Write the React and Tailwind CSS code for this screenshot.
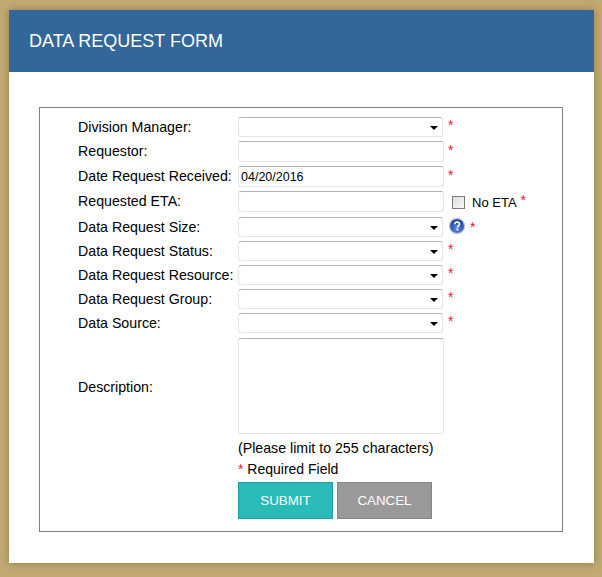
const ctl = "box-border border border-[#e3e5ea] border-t-[#b4b4b4] rounded-[3px] bg-white";
const Star = ({ className = "" }) => <span className={`text-[#f0143c] text-[14px] leading-none ${className}`}>*</span>;

function Select() {
  return (
    <div className={`${ctl} w-[205px] h-[20px] flex items-center justify-end pr-[4px]`}>
      <svg width="8" height="4" viewBox="0 0 8 4" className="mt-[2px]"><path d="M0 0H8L4 4Z" fill="#000" /></svg>
    </div>
  );
}
function Input({ value }) {
  return <div className={`${ctl} w-[206px] h-[21px] pl-[2px] pt-[1px] text-[12.5px] leading-[19px] text-black`}>{value}</div>;
}
function Row({ label, mt, labelClass = "", children }) {
  return (
    <div className="flex items-center" style={{ marginTop: mt }}>
      <div className={`w-[160px] text-[14.2px] leading-[16px] text-black whitespace-nowrap ${labelClass}`}>{label}</div>
      {children}
    </div>
  );
}
const Req = () => <Star className="ml-[5px] -mt-[4px]" />;

function Help() {
  return (
    <svg width="16" height="16" viewBox="0 0 16 16" className="ml-[6px] -mt-[3px]">
      <defs>
        <radialGradient id="h" cx="50%" cy="70%" r="65%">
          <stop offset="0%" stopColor="#5b92e6" />
          <stop offset="100%" stopColor="#1a3c9c" />
        </radialGradient>
      </defs>
      <circle cx="8" cy="8" r="8" fill="#aab4c2" />
      <circle cx="8" cy="8" r="6.8" fill="url(#h)" />
      <path d="M5.7 6.2C5.8 4.7 6.9 4 8 4c1.4 0 2.5.8 2.5 2.1 0 1.8-2.1 1.7-2.1 3.4" fill="none" stroke="#fff" strokeWidth="1.6" />
      <rect x="7.5" y="10.6" width="1.8" height="1.8" fill="#fff" />
    </svg>
  );
}

export default function App() {
  return (
    <div className="w-[602px] h-[577px] bg-[#c0a972] pt-[10px] pl-[9px] font-['Liberation_Sans',Arial,sans-serif] overflow-hidden">
      <div className="w-[585px] h-[553px] bg-white shadow-[0_0_8px_rgba(90,70,30,0.45)]">
        <div className="h-[62px] bg-[#336699] flex items-center pl-[20px] pt-[1px] text-white text-[18px]">DATA REQUEST FORM</div>
        <div className="pt-[35px] pl-[30px]">
          <div className="box-border w-[524px] h-[425px] border border-[#808080] pl-[38px] pt-[9px]">
            <Row label="Division Manager:" mt={0}><Select /><Req /></Row>
            <Row label="Requestor:" labelClass="-mt-[2px]" mt={4}><Input /><Star className="ml-[4px] -mt-[4px]" /></Row>
            <Row label="Date Request Received:" labelClass="-mt-[2px]" mt={4}><Input value="04/20/2016" /><Star className="ml-[4px] -mt-[4px]" /></Row>
            <Row label="Requested ETA:" labelClass="-mt-[2px]" mt={4}>
              <Input />
              <div className="ml-[8px] mt-[1px] w-[13px] h-[13px] box-border border border-[#7a7a7a] bg-gradient-to-br from-[#e0e0e0] to-[#f6f6f6]" />
              <span className="ml-[7px] mt-[3px] text-[13px] leading-[16px] text-black">No ETA</span>
              <Star className="ml-[4px] -mt-[4px]" />
            </Row>
            <Row label="Data Request Size:" mt={5}><Select /><Help /><Star className="ml-[5px]" /></Row>
            <Row label="Data Request Status:" mt={4}><Select /><Req /></Row>
            <Row label="Data Request Resource:" mt={4}><Select /><Req /></Row>
            <Row label="Data Request Group:" mt={4}><Select /><Req /></Row>
            <Row label="Data Source:" mt={4}><Select /><Req /></Row>
            <Row label="Description:" labelClass="mt-[2px]" mt={5}>
              <div className={`${ctl} w-[206px] h-[96px]`} />
            </Row>
            <div className="ml-[160px] mt-[6px] text-[14.2px] leading-[16px] text-black">(Please limit to 255 characters)</div>
            <div className="ml-[160px] mt-[5px] text-[14px] leading-[16px] text-black"><span className="text-[#f0143c]">*</span> Required Field</div>
            <div className="ml-[160px] mt-[5px] flex gap-[4px]">
              <div className="box-border w-[95px] h-[37px] bg-[#2abbb9] border border-[#1f9fa0] text-white text-[13.33px] flex items-center justify-center">SUBMIT</div>
              <div className="box-border w-[95px] h-[37px] bg-[#999999] border border-[#868686] text-white text-[13.33px] flex items-center justify-center">CANCEL</div>
            </div>
          </div>
        </div>
      </div>
    </div>
  );
}
